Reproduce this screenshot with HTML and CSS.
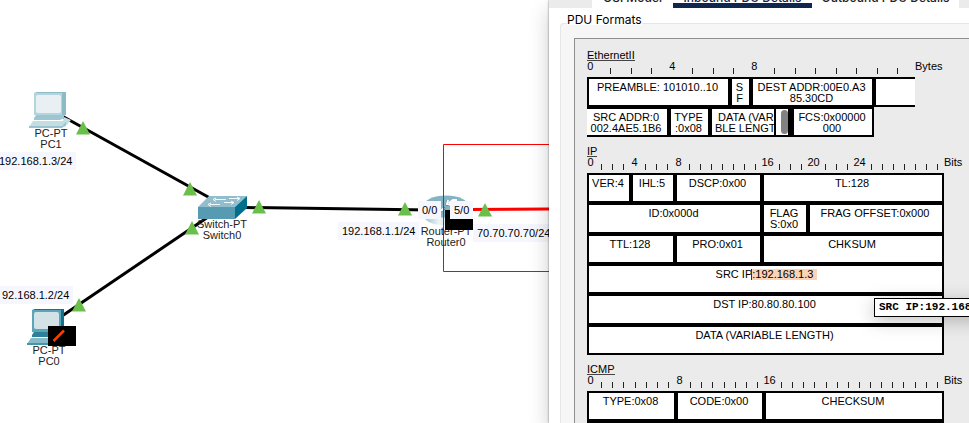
FILE: index.html
```html
<!DOCTYPE html>
<html lang="en">
<head>
<meta charset="utf-8">
<title>PDU Information</title>
<link rel="stylesheet" href="styles.css">
</head>
<body>
<main class="app">
  <section class="canvas" aria-label="Network topology">
    <svg class="drawing" width="549" height="423" viewBox="0 0 549 423" aria-hidden="true">
      <defs>
        <linearGradient id="body" x1="0" x2="1" y1="0" y2="0">
          <stop offset="0" stop-color="#8fbdcb" />
          <stop offset="0.350" stop-color="#eef5f8" />
          <stop offset="1" stop-color="#8fbdcb" />
        </linearGradient>
      </defs>
      <g stroke="#000" stroke-width="3">
        <path d="M62 116L210 198" />
        <path d="M62 316L208 217" />
        <path d="M246 207.500L430 210" />
      </g>
      <path d="M470 209.500L549 209" stroke="#f00" stroke-width="3" />

      <g>
        <path d="M64 117l7 3-6 7-3-2z" fill="#c3dde4" />
        <path d="M34 93l3-1h29v23H36z" fill="#8dbac7" />
        <path d="M34 93h28v22H34z" fill="#b4d5de" />
        <rect x="36" y="95" width="25" height="18" rx="2" fill="#e9f0f3" />
        <path d="M36 115h28v3l-4 2H34v-2z" fill="#9cc6d2" />
        <path d="M33 121h33l-5 6H29z" fill="#c3dde4" />
        <path d="M29 126h33l4-4v3l-4 3H29z" fill="#9cc4cf" />
      </g>

      <g>
        <path d="M32 310l3-1h29v24H34z" fill="#16708a" />
        <path d="M32 310h29v22H32z" fill="#5ba5b8" />
        <rect x="34" y="312" width="25" height="17" rx="2" fill="#d3e2e7" />
        <path d="M34 332h27v3l-3 2H32v-2z" fill="#2e8099" />
        <path d="M31 338h33l-5 6H27z" fill="#86bac8" />
        <path d="M27 343h33l4-4v3l-4 3H27z" fill="#4795aa" />
      </g>

      <g>
        <path d="M209 196h38l-12 11h-37z" fill="#91bdcc" />
        <path d="M198 207h37v12h-37z" fill="#579bb2" />
        <path d="M235 207l12-11v12l-12 11z" fill="#006f8c" />
        <path d="M215 199.500h11M229 198.500h10M210 204.500h10M224 202.500h9M216 198l-3 1.500 3 2M237 197l3 1.500-3 2M211 203l-3 1.500 3 2M231 201l3 1.500-3 2" fill="none" stroke="#f4f9fb" />
      </g>

      <g>
        <path d="M423 206v9c3 14 43 14 46 0v-9z" fill="url(#body)" />
        <ellipse cx="446" cy="206.500" rx="23" ry="11" fill="#85b3c3" />
        <path d="M441 212l4-3-1-2M448 204l4-3h4M447 200l-1 5 5 1" fill="none" stroke="#2f6c80" />
        <path d="M441 211l3-3M449 203l4-3h4M448 200l-1 4 4 1" fill="none" stroke="#fff" stroke-width="2" />
      </g>
      <path d="M549 144.500H443.500V271.500H549" fill="none" stroke="#f00" />
    </svg>

    <p class="device pc1">PC-PT<br>PC1</p>
    <p class="device pc0">PC-PT<br>PC0</p>
    <p class="device switch0">Switch-PT<br>Switch0</p>
    <p class="device router0">Router-PT<br>Router0</p>

    <svg class="drawing" width="549" height="423" viewBox="0 0 549 423" aria-hidden="true">
      <path d="M48 326h28v20H48zM445 210h28v20h-28z" />
      <path d="M53.500 341L64 330.500" stroke="#ff3b00" stroke-width="2.500" />
      <g fill="#6abf4b">
        <path d="M83 121l7 13.500H76z" />
        <path d="M190 182l7 13.500h-14z" />
        <path d="M192 221l7 13.500h-14z" />
        <path d="M259 200l7 13.500h-14z" />
        <path d="M79 298l7 13.500H72z" />
        <path d="M405 202l7 13.500h-14z" />
        <path d="M485 203l7 13.500h-14z" />
      </g>
    </svg>

    <p class="note note-pc1">192.168.1.3/24</p>
    <p class="note note-pc0">92.168.1.2/24</p>
    <p class="note note-lan">192.168.1.1/24</p>
    <p class="note note-wan">70.70.70.70/24</p>
    <p class="note port-lan">0/0</p>
    <p class="note port-wan">5/0</p>
  </section>

  <section class="dialog" aria-label="PDU details">
    <nav class="tabbar">
      <button class="tab tab-osi" type="button">OSI Model</button>
      <button class="tab tab-in active" type="button">Inbound PDU Details</button>
      <button class="tab tab-out" type="button">Outbound PDU Details</button>
    </nav>
    <h1 class="heading">PDU Formats</h1>
    <div class="group">
      <div class="formats">
        <section class="layer">
          <h2>EthernetII</h2>
          <div class="scale bytes">
            <b>0</b><i></i><i></i><i></i><b>4</b><i></i><i></i><i></i><b>8</b><i></i><i></i><i></i><i></i><i></i><i></i><i></i><span>Bytes</span>
          </div>
          <table class="ethernet">
            <colgroup><col class="w82"><col class="w41"><col class="w20"><col class="w21"><col class="w41"><col class="w82"><col class="w41"></colgroup>
            <tr><td colspan="3">PREAMBLE: 101010..10</td><td>S<br>F</td><td colspan="2">DEST ADDR:00E0.A3<br>85.30CD</td><td class="open-right"></td></tr>
            <tr><td class="open-left">SRC ADDR:0<br>002.4AE5.1B6</td><td>TYPE<br>:0x08</td><td class="scrolling" colspan="3">DATA (VARIA<br>BLE LENGTH)<span class="scroller"></span></td><td>FCS:0x00000<br>000</td></tr>
          </table>
        </section>

        <section class="layer">
          <h2>IP</h2>
          <div class="scale">
            <b>0</b><i></i><i></i><i></i><b>4</b><i></i><i></i><i></i><b>8</b><i></i><i></i><i></i><i></i><i></i><i></i><i></i><b class="wide">16</b><i></i><i></i><i></i><b class="wide">20</b><i></i><i></i><i></i><b class="wide">24</b><i></i><i></i><i></i><i></i><i></i><i></i><i></i><span>Bits</span>
          </div>
          <table class="ip">
            <colgroup><col class="w44"><col class="w44"><col class="w87"><col class="w46"><col class="w136"></colgroup>
            <tr><td>VER:4</td><td>IHL:5</td><td>DSCP:0x00</td><td colspan="2">TL:128</td></tr>
            <tr><td colspan="3">ID:0x000d</td><td>FLAG<br>S:0x0</td><td>FRAG OFFSET:0x000</td></tr>
            <tr><td colspan="2">TTL:128</td><td>PRO:0x01</td><td colspan="2">CHKSUM</td></tr>
            <tr><td colspan="5">SRC IP<mark>:192.168.1.3</mark></td></tr>
            <tr><td colspan="5">DST IP:80.80.80.100</td></tr>
            <tr><td colspan="5">DATA (VARIABLE LENGTH)</td></tr>
          </table>
        </section>

        <section class="layer">
          <h2>ICMP</h2>
          <div class="scale">
            <b>0</b><i></i><i></i><i></i><i></i><i></i><i></i><i></i><b>8</b><i></i><i></i><i></i><i></i><i></i><i></i><i></i><b class="wide">16</b><i></i><i></i><i></i><i></i><i></i><i></i><i></i><i></i><i></i><i></i><i></i><i></i><i></i><i></i><i></i><span>Bits</span>
          </div>
          <table class="icmp">
            <colgroup><col class="w89"><col class="w88"><col class="w180"></colgroup>
            <tr><td>TYPE:0x08</td><td>CODE:0x00</td><td>CHECKSUM</td></tr>
            <tr><td colspan="3"></td></tr>
          </table>
        </section>
      </div>
    </div>
    <div class="tooltip" role="tooltip">SRC IP:192.168.1.3</div>
  </section>
</main>
</body>
</html>
```
FILE: styles.css
```css
* { box-sizing: border-box; }

body {
  margin: 0;
  background: #fff;
  color: #000;
  font: 11px/11px "Liberation Sans", Arial, sans-serif;
}

h1, h2, p { margin: 0; font-weight: normal; }

.app {
  display: flex;
  height: 100vh;
  overflow: hidden;
}

/* topology canvas */
.canvas {
  position: relative;
  flex: 1;
  overflow: hidden;
}

.drawing { position: absolute; left: 0; top: 0; }

.device {
  position: absolute;
  width: 60px;
  color: #222;
  text-align: center;
}
.pc1 { left: 21px; top: 128px; }
.pc0 { left: 19px; top: 345px; }
.switch0 { left: 192px; top: 219px; }
.router0 { left: 416px; top: 226px; }

.note {
  position: absolute;
  padding: 0 4px;
  background: #f6f7fe;
  line-height: 18px;
  white-space: nowrap;
}
.note-pc1 { left: -5px; top: 152px; }
.note-pc0 { left: -2px; top: 286px; }
.note-lan { left: 338px; top: 222px; }
.note-wan { left: 473px; top: 224px; }
.port-lan { left: 418px; top: 201px; }
.port-wan { left: 450px; top: 201px; }

/* details dialog */
.dialog {
  position: relative;
  display: flex;
  flex-direction: column;
  flex: 0 0 420px;
  background: #fff;
  box-shadow: 0 0 2px rgba(0, 0, 0, 0.5), 0 10px 20px rgba(0, 0, 0, 0.2);
}

.tabbar {
  display: flex;
  align-items: flex-end;
  height: 8px;
  padding: 0 10px 0 43px;
  background: #ebebeb;
  overflow: hidden;
}
.tab {
  flex: none;
  height: 17px;
  padding: 0 0 3px;
  border: 0;
  background: #fff;
  color: #222;
  font: 500 12px/14px Inter, sans-serif;
  white-space: nowrap;
}
.tab-osi { width: 81px; }
.tab-in { width: 139px; }
.tab-out { width: 147px; }
.tab.active {
  box-shadow: inset 0 -5px #10264f;
  color: #10264f;
}

.heading {
  z-index: 1;
  align-self: flex-start;
  height: 17px;
  margin-left: 18px;
  padding-top: 5px;
  background: #fff;
  font: 12px/14px Inter, sans-serif;
}

.group {
  flex: 1;
  min-height: 0;
  margin: -2px 0 0 11px;
  padding: 14px 0 0 13px;
  border: 1px solid #e6e6e6;
  border-width: 1px 0 0 1px;
  border-radius: 4px 0 0;
  background: #f6f6f6;
}

.formats {
  display: flex;
  flex-direction: column;
  gap: 9px;
  height: 100%;
  padding: 11px 0 0 12px;
  border: 1px solid #8e8e8e;
  border-width: 1px 0 0 1px;
  background: #ebebeb;
  overflow: hidden;
}

.layer { flex: none; }

.layer h2 {
  width: max-content;
  height: 11px;
  border-bottom: 1px solid #444;
  font-size: 11px;
  line-height: 11px;
}

.scale {
  display: flex;
  width: 358px;
  height: 16px;
  margin-left: -2px;
}
.scale.bytes { width: 328px; margin-left: -7px; }
.scale b, .scale i {
  flex: 1 1 0;
  min-width: 0;
  font-weight: normal;
  text-align: center;
}
.scale .wide { flex: 0 0 13px; }
.scale i::before {
  content: "";
  display: block;
  width: 1px;
  height: 6px;
  margin: 7px auto 0;
  background: #222;
}
.scale span { width: 0; margin-left: 1px; margin-right: -1px; }
.scale.bytes span { margin-left: 7px; margin-right: -7px; }

table {
  table-layout: fixed;
  border-spacing: 0;
  border-collapse: separate;
}
.ethernet { width: 328px; }
.ip { width: 357px; height: 182px; }
.icmp { width: 357px; }

td {
  height: 30px;
  padding: 3px 2px 0 0;
  border: 2px solid #000;
  background: #fff;
  text-align: center;
  vertical-align: top;
  white-space: nowrap;
}
.open-right { border-right: 0; }
.open-left { border-left: 0; }

.w20 { width: 20px; }
.w21 { width: 21px; }
.w41 { width: 41px; }
.w44 { width: 44px; }
.w46 { width: 46px; }
.w82 { width: 82px; }
.w87 { width: 87px; }
.w88 { width: 88px; }
.w89 { width: 89px; }
.w136 { width: 136px; }
.w180 { width: 180px; }

.scrolling { position: relative; padding-right: 0; }
.scroller {
  position: absolute;
  top: 0;
  right: 0;
  bottom: 0;
  width: 16px;
  border: solid #000;
  border-width: 0 2px;
  background: #fff;
}
.scroller::before {
  content: "";
  position: absolute;
  top: 1px;
  right: 0;
  bottom: 1px;
  width: 7px;
  border-radius: 4px;
  background: #828282;
}

mark {
  display: inline-block;
  height: 11px;
  margin-right: -4px;
  padding-right: 4px;
  background: #fcd3b4;
  box-shadow: -1px 0 0 #123a6b;
  color: inherit;
}

.tooltip {
  position: absolute;
  left: 325px;
  top: 298px;
  padding: 3px 4px;
  border: 1px solid #000;
  background: #fff;
  box-shadow: 0 4px 18px rgba(0, 0, 0, 0.25);
  font: bold 11px/11px "Liberation Mono", "Courier New", monospace;
  white-space: nowrap;
}
```
